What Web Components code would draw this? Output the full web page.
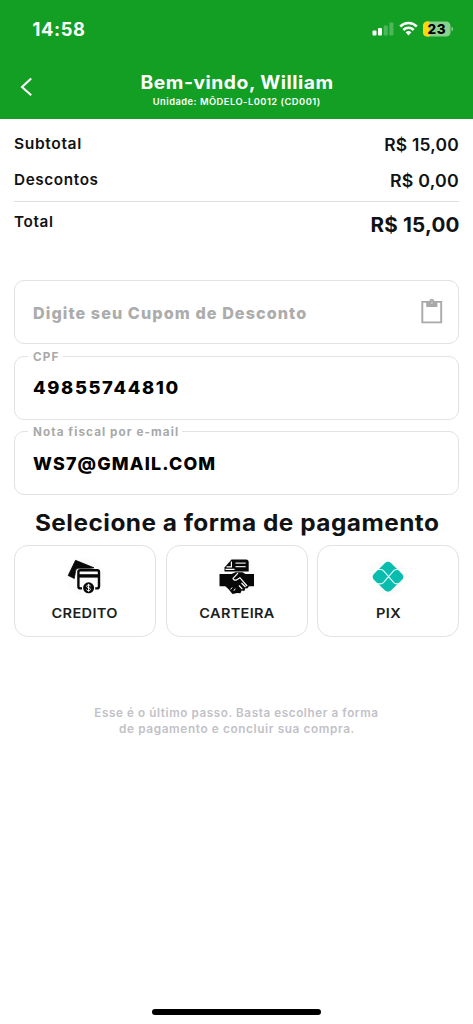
<!DOCTYPE html>
<html lang="pt-BR">
<head>
<meta charset="utf-8">
<meta name="viewport" content="width=device-width, initial-scale=1">
<title>Pagamento</title>
<style>
html,body{margin:0;height:100%;background:#fff;overflow:hidden}
body{font-family:Inter,"Open Sans",sans-serif;color:#111214}
</style>
</head>
<body>
<checkout-page></checkout-page>
<script>
const define = (name, html, setup) => customElements.define(name, class extends HTMLElement {
  connectedCallback() {
    if (this.shadowRoot) return;
    const root = this.attachShadow({ mode: 'open' });
    root.innerHTML = html;
    if (setup) setup(this, root);
  }
});

/* One line of type: size, weight, tracking and width scale come from attributes. */
define('type-line', `<style>
:host{display:block;white-space:nowrap;line-height:0}
span{display:inline-block;vertical-align:top;transform-origin:var(--origin,left)}
</style><span><slot></slot></span>`, (host, root) => {
  const s = root.querySelector('span').style;
  const track = parseFloat(host.getAttribute('track') || 0);
  s.fontSize = host.getAttribute('size') + 'px';
  s.lineHeight = (host.getAttribute('line') || 20) + 'px';
  s.fontWeight = host.getAttribute('weight') || 700;
  s.letterSpacing = track + 'px';
  s.marginRight = -track + 'px';
  if (host.hasAttribute('stretch')) s.transform = 'scaleX(' + host.getAttribute('stretch') + ')';
});

define('status-bar', `<style>
:host{display:flex;justify-content:space-between;align-items:center;height:58px;padding:0 20px 0 32.5px}
svg{display:block}
</style>
<type-line size="18.3" weight="700" track="0.6">14:58</type-line>
<svg width="82" height="18" viewBox="0 0 82 18" style="margin-top:-2px">
  <g fill="#fff"><rect x="1.5" y="11.5" width="4" height="5" rx="1"/><rect x="7" y="9" width="4" height="7.5" rx="1"/>
  <g opacity=".25"><rect x="12.7" y="6.5" width="4" height="10" rx="1"/><rect x="18.4" y="3.5" width="4" height="13" rx="1"/></g></g>
  <g fill="none" stroke="#fff" stroke-width="2.5"><path d="M29.2 7.5a11.7 11.7 0 0 1 16.6 0"/><path d="M32.3 11a7.4 7.4 0 0 1 10.4 0"/></g>
  <path d="M34.6 13.3a4.2 4.2 0 0 1 5.8 0L37.5 16.6z" fill="#fff"/>
  <clipPath id="b"><rect x="52" y="2.5" width="27.5" height="15" rx="4.3"/></clipPath>
  <g clip-path="url(#b)"><path fill="#8bd08f" d="M52 2h28v16H52z"/><path fill="#ffd60f" d="M52 2h6.5v16H52z"/></g>
  <path d="M80.5 7.7q1.8.8 1.8 2.3t-1.8 2.3z" fill="#8bd08f"/>
  <text x="65.6" y="15" text-anchor="middle" font-family="Inter" font-weight="800" font-size="13.5" textLength="18" fill="#000">23</text>
</svg>`);

define('app-header', `<style>
:host{display:block;height:118.5px;background:#139f24;color:#fff}
.nav{display:grid;grid-template-columns:52px 1fr 52px;height:60.5px}
.titles{text-align:center;padding-top:12px;--origin:center}
.back{padding:19px 0 0 19px}
svg{display:block}
</style>
<status-bar></status-bar>
<div class="nav">
  <div class="back"><svg width="14" height="20" viewBox="0 0 14 20"><path d="M12.2 1.5 3 10l9.2 8.3" fill="none" stroke="#fff" stroke-width="2.1"/></svg></div>
  <div class="titles">
    <type-line size="18.4" line="24" weight="700" track="0.5" stretch="1.048">Bem-vindo, William</type-line>
    <type-line size="9.3" line="15" weight="600" track="0.5">Unidade: MÔDELO-L0012 (CD001)</type-line>
  </div>
</div>`);

define('order-summary', `<style>
:host{display:block;padding:0 14px;height:161.5px;box-sizing:border-box}
.row{display:flex;justify-content:space-between;box-sizing:border-box}
.a{padding-top:15px;height:47px}
.b{padding-top:4px;height:35px}
.c{border-top:1.5px solid #dfdfe0;padding-top:10.5px}
.v{padding-top:1.5px;--origin:right}
.b .v{padding-top:1px}
.t{padding-top:3px;--origin:right}
</style>
<div class="row a"><type-line size="15" weight="600" track="0.6" stretch="1.04">Subtotal</type-line><type-line class="v" size="17" weight="600" track="0.2" stretch="1.025">R$ 15,00</type-line></div>
<div class="row b"><type-line size="15" weight="600" track="0.6" stretch="1.02">Descontos</type-line><type-line class="v" size="17" weight="600" track="0.2" stretch="1.045">R$ 0,00</type-line></div>
<div class="row c"><type-line size="15" weight="600" track="0.6" stretch="1.02">Total</type-line><type-line class="t" size="20" weight="700" track="0.2" stretch="1.03">R$ 15,00</type-line></div>`);

/* Outlined input whose legend cuts the top border. */
define('outlined-field', `<style>
:host{display:block;height:64px}
fieldset{box-sizing:border-box;height:100%;margin:0;padding:0;border:1.5px solid #e2e2e2;border-radius:10px;position:relative;min-width:0}
.label{position:absolute;left:13px;top:-10px;padding:0 4px 0 5px;background:#fff;color:#a9a9a9}
.in{display:flex;justify-content:space-between;align-items:center;box-sizing:border-box;height:100%;padding:1px 15.5px 0 18px;color:#000}
:host(:not([label])) .label{display:none}
:host(:not([label])) .in{color:#acacac}
</style>
<fieldset><div class="label"><slot name="label"></slot></div><div class="in"><slot></slot><slot name="icon"></slot></div></fieldset>`);

define('clipboard-icon', `<style>:host{display:block;margin-top:-2.5px}svg{display:block}</style>
<svg width="22" height="26" viewBox="0 0 22 26"><path d="M1.3 3.9h18.9v20.5H1.3z" fill="none" stroke="#a9a9a9" stroke-width="1.9"/><path fill="#a9a9a9" fill-rule="evenodd" d="M5.2 3.2h3Q8.7.8 10.800.8t2.600 2.400h3v5.900H5.200zM10.800 2.600a1.400 1.400 0 1 0 .01 0z"/></svg>`);

define('payment-option', `<style>
:host{display:flex;flex-direction:column;align-items:center;box-sizing:border-box;height:91.5px;border:1.5px solid #e2e2e2;border-radius:14px;padding-top:12px;color:#1d1e20;gap:8px;--origin:center}
.icon{width:38px;height:38px;border-radius:50%;background:#fcfcfc}
</style><div class="icon"><slot name="icon"></slot></div><slot></slot>`);

define('credit-icon', `<style>:host,svg{display:block}</style>
<svg width="38" height="38" viewBox="0 0 38 38">
<path d="M9.5 2.3 28 9.800q-2 .4-4 .4H12.500q-3 0-3 3L8.300 20.500 2.200 17.500z" fill="#080808" stroke="#080808" stroke-width=".8" stroke-linejoin="round"/>
<path d="M13.300 12.300h18q1.700 0 1.700 1.800v14.300q0 1.900-2.200 2h-1.600M16 30.400h-1.200q-2.400 0-2.400-2V14q0-1.700 1.600-1.700" fill="none" stroke="#080808" stroke-width="2.400"/>
<path d="M12.500 16.200h20.700v3.400H12.500z" fill="#080808"/>
<circle cx="22.600" cy="29.800" r="5.500" fill="#080808"/><path d="M24.600 28q-.6-1-2-1c-2.700 0-2.500 2.400 0 2.800s2.600 2.900 0 2.900q-1.600 0-2.200-1.100M22.600 25.900v7.800" stroke="#fff" stroke-width="1" fill="none"/></svg>`);

define('handshake-icon', `<style>:host,svg{display:block}</style>
<svg width="38" height="38" viewBox="0 0 38 38">
<path d="M13.500 1.500h14.500q2.700 0 2.700 2.700v9.300H6.500V9.500z" fill="#080808"/>
<path d="M13.400 3.600v5.300H8.500M7.500 11.300h9" stroke="#fff" stroke-width="1.200" fill="none"/><path d="M17.500 5.200h10.200M17.500 8.700h10.200" stroke="#ddd" stroke-width="1.300"/>
<path d="M1.500 16h12l4-1.700h7l3 1.700H36v12.300h-5l-1.800 2.200-1.700-.4-1.200 2.800-2.600-.4-1.300 2.700-3.200-.2L14.500 36l-4.100-5-3.100-2.800H1.500z" fill="#080808"/>
<path d="M20 15.200 15 20.400q.6 2.300 3.500 1.500l3.400-2.200 7.200 8.300M23.500 25l4 4M21 27.500l3.300 3.600" stroke="#fff" stroke-width="1.200" fill="none"/><path d="M14.100 29.500l-1.500 2M17.300 30.600l-1.400 2.200" stroke="#fff" stroke-width="1" fill="none"/></svg>`);

define('pix-icon', `<style>:host,svg{display:block}</style>
<svg width="38" height="38" viewBox="0 0 38 38">
<path d="M15.800 5.200q3.200-2.700 6.400 0l10.700 10.500q2.900 3.100 0 6.200L22.200 32.300q-3.200 2.700-6.400 0L5.100 21.900q-2.900-3.100 0-6.200z" fill="#08bdad"/>
<path d="M8 11.500h3.500q1.700 0 2.900 1.200L24.800 24.700q1.200 1.200 2.900 1.200H31M7 25.900h4.500q1.700 0 2.900-1.200L24.800 12.700Q26 11.500 27.700 11.500H31" fill="none" stroke="#e8fbf9" stroke-width="1.100"/></svg>`);

define('checkout-page', `<style>
:host{display:flex;flex-direction:column;height:100vh;min-height:1024px;background:#fff}
.fields{display:grid;gap:11.600px;margin:0 14px}
h2{margin:13px 0 7.300px;text-align:center;font:inherit;--origin:center}
.options{display:grid;grid-template-columns:repeat(3,1fr);gap:9.500px;margin:0 14px}
.note{margin-top:68px;text-align:center;color:#c1c1c7;--origin:center}
.home{width:169px;height:6px;border-radius:3px;background:#000;margin:auto auto 9px}
</style>
<app-header></app-header>
<order-summary></order-summary>
<div class="fields">
<outlined-field><type-line size="16.200" weight="800" track="1.050">Digite seu Cupom de Desconto</type-line><clipboard-icon slot="icon"></clipboard-icon></outlined-field>
<outlined-field label><type-line slot="label" size="11.700" weight="700" track="1.200">CPF</type-line><type-line size="17.500" weight="800" track="1.550" stretch="1.050">49855744810</type-line></outlined-field>
<outlined-field label><type-line slot="label" size="11.700" weight="700" track="1.080">Nota fiscal por e-mail</type-line><type-line size="17.500" weight="800" track="1.150" stretch="1.020">WS7@GMAIL.COM</type-line></outlined-field>
</div>
<h2><type-line size="22.700" line="30" weight="650" track="0.450" stretch="1.075">Selecione a forma de pagamento</type-line></h2>
<div class="options">
<payment-option><credit-icon slot="icon"></credit-icon><type-line size="13.500" line="18" weight="600" track="0.300" stretch="1.080">CREDITO</type-line></payment-option>
<payment-option><handshake-icon slot="icon"></handshake-icon><type-line size="13.500" line="18" weight="600" track="0.300" stretch="1.075">CARTEIRA</type-line></payment-option>
<payment-option><pix-icon slot="icon"></pix-icon><type-line size="13.500" line="18" weight="600" track="0.300" stretch="1.080">PIX</type-line></payment-option>
</div>
<div class="note"><type-line size="11.500" line="16" weight="600" track="0.600" stretch="1.012">Esse é o último passo. Basta escolher a forma</type-line><type-line size="11.500" line="16" weight="600" track="0.600" stretch="1.025">de pagamento e concluir sua compra.</type-line></div>
<div class="home"></div>`);
</script>
</body>
</html>
